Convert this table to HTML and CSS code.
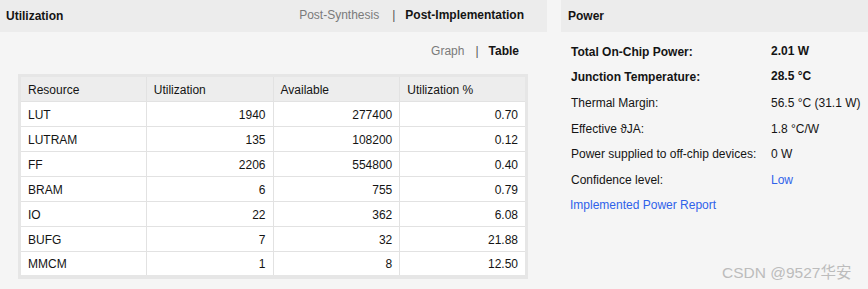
FILE: index.html
```html
<!DOCTYPE html>
<html>
<head>
<meta charset="utf-8">
<link rel="stylesheet" href="styles.css">
</head>
<body>
<div class="page">
  <section class="util">
    <header class="bar">
      <span class="title">Utilization</span>
      <nav class="tabs">
        <span class="off">Post-Synthesis</span>
        <span class="sep">|</span>
        <span class="on">Post-Implementation</span>
      </nav>
    </header>
    <div class="toggle">
      <span class="off">Graph</span>
      <span class="sep">|</span>
      <span class="on">Table</span>
    </div>
    <table class="grid">
      <thead>
        <tr><th>Resource</th><th>Utilization</th><th>Available</th><th>Utilization %</th></tr>
      </thead>
      <tbody>
        <tr><td>LUT</td><td class="n">1940</td><td class="n">277400</td><td class="n">0.70</td></tr>
        <tr><td>LUTRAM</td><td class="n">135</td><td class="n">108200</td><td class="n">0.12</td></tr>
        <tr><td>FF</td><td class="n">2206</td><td class="n">554800</td><td class="n">0.40</td></tr>
        <tr><td>BRAM</td><td class="n">6</td><td class="n">755</td><td class="n">0.79</td></tr>
        <tr><td>IO</td><td class="n">22</td><td class="n">362</td><td class="n">6.08</td></tr>
        <tr><td>BUFG</td><td class="n">7</td><td class="n">32</td><td class="n">21.88</td></tr>
        <tr><td>MMCM</td><td class="n">1</td><td class="n">8</td><td class="n">12.50</td></tr>
      </tbody>
    </table>
  </section>
  <section class="power">
    <header class="bar"><span class="title ptitle">Power</span></header>
    <div class="plist">
      <div class="prow b"><span class="k">Total On-Chip Power:</span><span class="v">2.01 W</span></div>
      <div class="prow b"><span class="k">Junction Temperature:</span><span class="v">28.5 °C</span></div>
      <div class="prow"><span class="k">Thermal Margin:</span><span class="v">56.5 °C (31.1 W)</span></div>
      <div class="prow"><span class="k">Effective &#977;JA:</span><span class="v">1.8 °C/W</span></div>
      <div class="prow"><span class="k">Power supplied to off-chip devices:</span><span class="v">0 W</span></div>
      <div class="prow"><span class="k">Confidence level:</span><span class="v link">Low</span></div>
      <div class="prow"><span class="link">Implemented Power Report</span></div>
    </div>
  </section>
</div>
<div class="mark">CSDN @9527华安</div>
</body>
</html>
```

FILE: styles.css
```css
html, body {
  margin: 0;
  padding: 0;
  background: #f5f5f5;
  font-family: "Liberation Sans", Arial, sans-serif;
  font-size: 12px;
  color: #141414;
}
.page {
  display: flex;
  gap: 14px;
  height: 289px;
}
.util {
  width: 547px;
  flex: none;
}
.power {
  flex: 1;
}
.bar {
  height: 32px;
  background: #ececec;
  display: flex;
  align-items: center;
  justify-content: space-between;
}
.title {
  font-weight: bold;
  padding-left: 6px;
}
.ptitle {
  padding-left: 7px;
}
.tabs {
  display: flex;
  padding-right: 23px;
  margin-top: -3px;
}
.off { color: #7a7a7a; }
.on { font-weight: bold; }
.sep { color: #555; margin: 0 10px 0 13px; }
.toggle {
  height: 42px;
  display: flex;
  justify-content: flex-end;
  align-items: center;
  padding-right: 28px;
  margin-top: -2px;
}
.toggle .sep { margin: 0 10px 0 11px; }
.grid {
  margin-left: 18px;
  margin-top: 2px;
  border-collapse: collapse;
  border: 3px solid #e6e6e6;
  border-bottom-width: 4px;
  background: #fff;
  table-layout: fixed;
  width: 510px;
}
.grid th, .grid td {
  width: 126px;
  padding: 0 7px;
  border: 1px solid #e2e2e2;
  text-align: left;
  font-weight: normal;
  box-sizing: border-box;
}
.grid th {
  background: #ededed;
  height: 26px;
  padding-top: 1px;
}
.grid td.n {
  text-align: right;
}
.grid tbody td { height: 25px; padding-top: 1px; }
.plist {
  padding: 7px 0 0 10px;
}
.prow {
  height: 25.6px;
  display: flex;
  align-items: center;
}
.prow.b { font-weight: bold; }
.prow.b .v { margin-top: -2px; }
.k {
  width: 200px;
  flex: none;
}
.link { color: #2f62ea; }
.prow .link:only-child { margin-left: -1px; }
.mark {
  position: absolute;
  left: 722px;
  top: 260px;
  font-size: 15.5px;
  color: #bcbcbc;
  font-family: "Liberation Sans", "Noto Sans CJK SC", sans-serif;
}
```
